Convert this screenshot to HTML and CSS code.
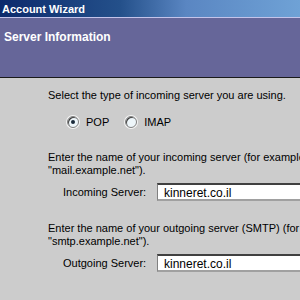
FILE: index.html
```html
<!DOCTYPE html>
<html lang="en">
<head>
    <meta charset="UTF-8">
    <title>Account Wizard</title>
    <link rel="stylesheet" href="styles.css">
</head>
<body>
<div class="wizard">
    <div class="titlebar">Account Wizard</div>
    <div class="header">Server Information</div>
    <div class="content">
        <p class="intro">Select the type of incoming server you are using.</p>
        <div class="radios">
            <label class="radio"><span class="dot checked"></span>POP</label>
            <label class="radio"><span class="dot"></span>IMAP</label>
        </div>
        <p class="desc">Enter the name of your incoming server (for example<br>"mail.example.net").</p>
        <div class="field">
            <span class="label">Incoming Server:</span>
            <span class="input">kinneret.co.il</span>
        </div>
        <p class="desc">Enter the name of your outgoing server (SMTP) (for example<br>"smtp.example.net").</p>
        <div class="field">
            <span class="label">Outgoing Server:</span>
            <span class="input">kinneret.co.il</span>
        </div>
    </div>
</div>
</body>
</html>
```

FILE: styles.css
```css
*{
    margin: 0;
    padding: 0;
    box-sizing: border-box;
}
body{
    width: 300px;
    height: 300px;
    overflow: hidden;
    background: #cccccc;
    font-family: "Liberation Sans", Arial, sans-serif;
    font-size: 11px;
    color: #000;
}
.wizard{
    width: 300px;
    height: 300px;
    overflow: hidden;
}
.titlebar{
    height: 18px;
    padding: 2px 0 0 2px;
    font-weight: bold;
    font-size: 11px;
    line-height: 14px;
    color: #fff;
    background: linear-gradient(to right, #0c2a6c 0%, #24508a 40%, #5a86c2 62%, #6fa2d6 100%);
    border-bottom: 1px solid #c4c4ea;
}
.header{
    height: 60px;
    padding: 12px 0 0 4px;
    font-weight: bold;
    font-size: 12px;
    line-height: 14px;
    color: #fff;
    background: #666699;
    border-bottom: 1px solid #1a1a1a;
}
.content{
    padding: 11px 0 0 48px;
    white-space: nowrap;
    line-height: 13px;
}
.radios{
    display: flex;
    gap: 16px;
    height: 16px;
    margin: 12px 0 0 19px;
    align-items: center;
}
.radio{
    display: flex;
    align-items: center;
    gap: 7px;
}
.dot{
    width: 12px;
    height: 12px;
    border-radius: 50%;
    border: 1px solid #808080;
    box-shadow: inset 1px 1px 0 #404040, 0 0 0 1px #f4f4f4;
    background: #eef6fa;
    position: relative;
}
.dot.checked::after{
    content: "";
    position: absolute;
    left: 3px;
    top: 3px;
    width: 4px;
    height: 4px;
    border-radius: 50%;
    background: #1a2a3a;
}
.desc{
    margin-top: 21px;
}
.field{
    display: flex;
    align-items: center;
    margin-top: 6px;
    height: 18px;
}
.label{
    flex-shrink: 0;
    width: 109px;
    padding-left: 15px;
}
.input{
    flex-shrink: 0;
    width: 200px;
    height: 18px;
    padding: 2px 0 0 6px;
    background: #fff;
    border-top: 2px solid #404040;
    border-left: 1px solid #808080;
    border-bottom: 2px solid #a0a0a0;
    font-size: 12px;
    line-height: 13px;
}
```
